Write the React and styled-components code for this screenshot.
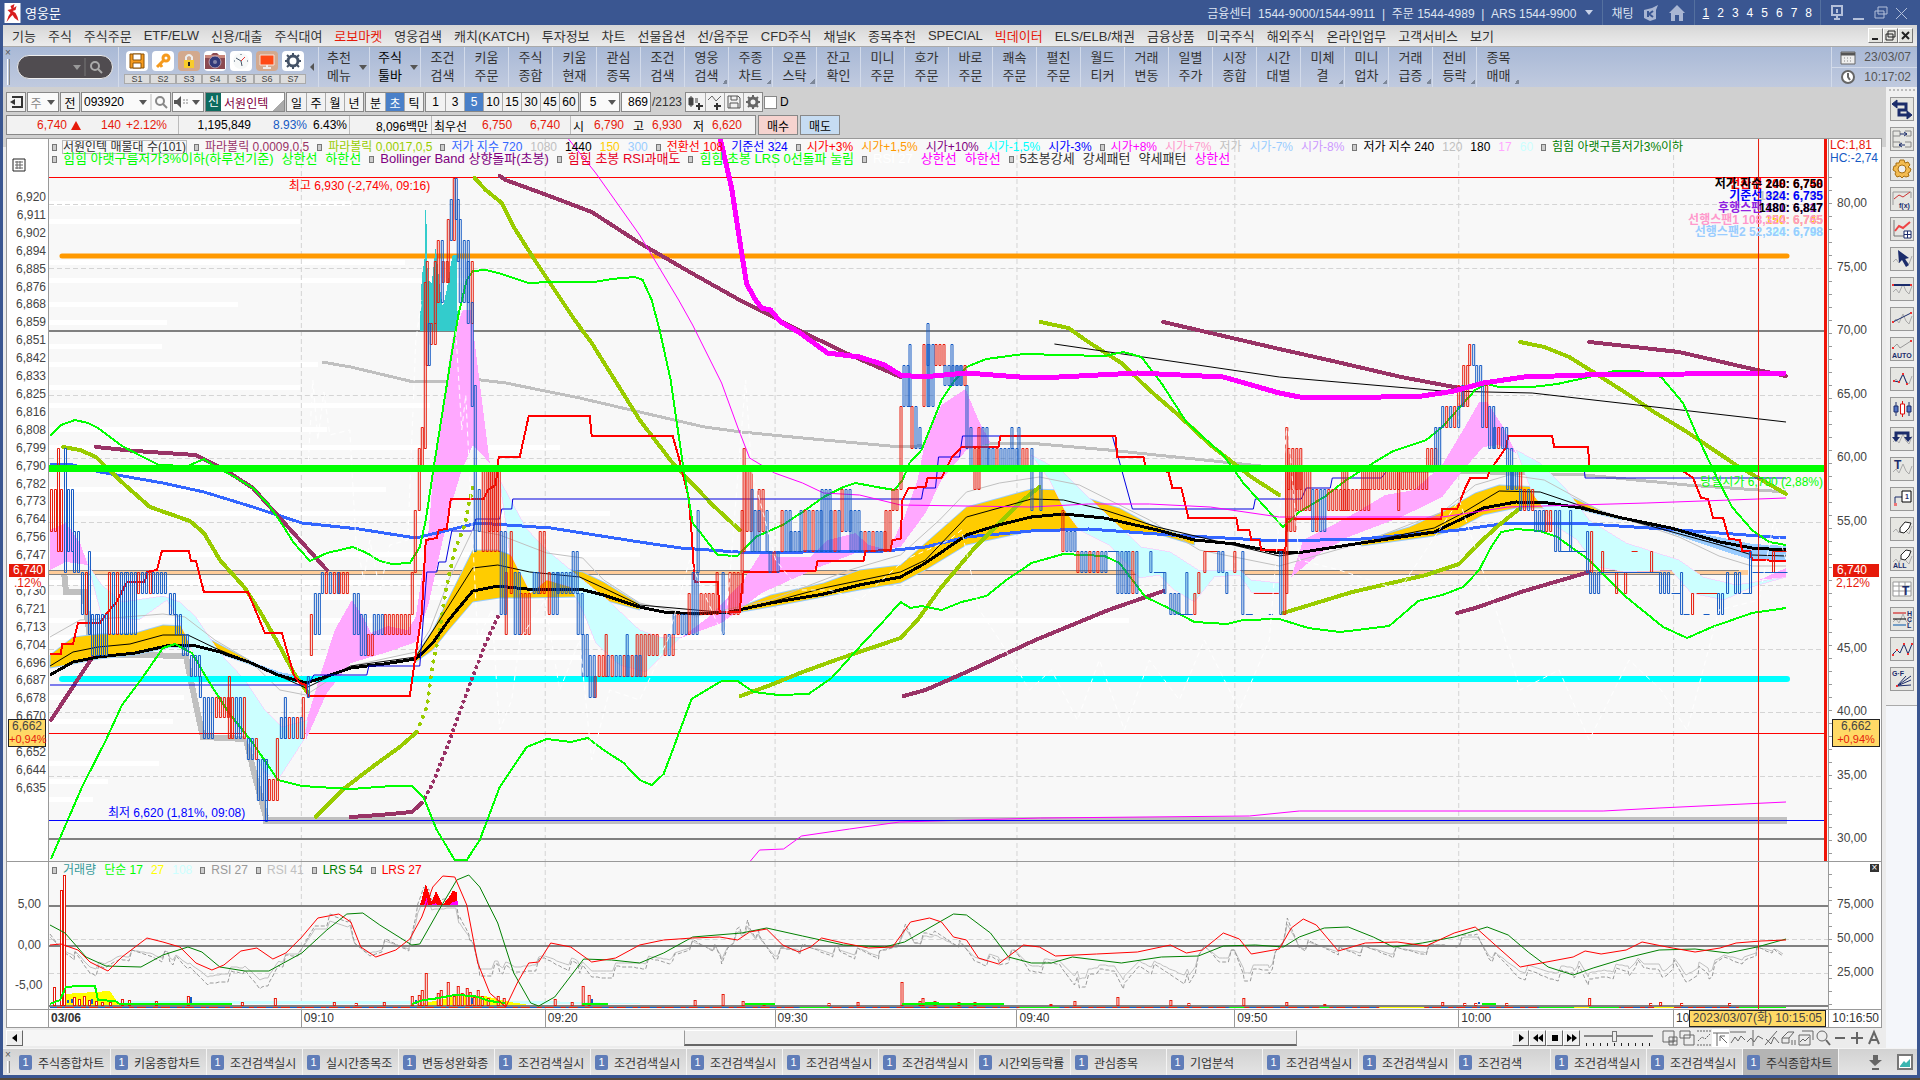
import React, { useState } from 'react';
import styled, { createGlobalStyle } from 'styled-components';

const IconText = styled.text`
  font-family: 'Liberation Sans', sans-serif;
  font-size: ${(props) => (props.$big ? 12 : 7)}px;
  font-weight: bold;
  fill: #1b2c6b;
`;

const menus = [
  '기능', '주식', '주식주문', 'ETF/ELW', '신용/대출', '주식대여', '로보마켓', '영웅검색', '캐치(KATCH)',
  '투자정보', '차트', '선물옵션', '선/옵주문', 'CFD주식', '채널K', '종목추천', 'SPECIAL', '빅데이터',
  'ELS/ELB/채권', '금융상품', '미국주식', '해외주식', '온라인업무', '고객서비스', '보기',
];

const shortcuts = [
  ['조건', '검색'], ['키움', '주문'], ['주식', '종합'], ['키움', '현재'], ['관심', '종목'],
  ['조건', '검색'], ['영웅', '검색', 1], ['주종', '차트', 1], ['오픈', '스탁', 1], ['잔고', '확인'],
  ['미니', '주문'], ['호가', '주문'], ['바로', '주문'], ['쾌속', '주문'], ['펼친', '주문'],
  ['월드', '티커'], ['거래', '변동'], ['일별', '주가'], ['시장', '종합'], ['시간', '대별'],
  ['미체', '결', 1], ['미니', '업차', 1], ['거래', '급증', 1], ['전비', '등락', 1], ['종목', '매매', 1],
];

const tabs = [
  '주식종합차트', '키움종합차트', '조건검색실시', '실시간종목조', '변동성완화종', '조건검색실시', '조건검색실시',
  '조건검색실시', '조건검색실시', '조건검색실시', '시간외등락률', '관심종목', '기업분석', '조건검색실시',
  '조건검색실시', '조건검색', '조건검색실시', '조건검색실시', '주식종합차트',
];

// [text, color], a null entry is the little square that opens a group
const legendTop = [
  null, ['서원인텍 매물대 수(101)', '#333', true],
  null, ['파라볼릭 0,0009,0,5', '#993366'],
  null, ['파라볼릭 0,0017,0,5', '#99cc00'],
  null, ['저가 지수 720', '#3366ff'], ['1080', '#c0c0c0'], ['1440', '#000'], ['150', '#ffcc00'], ['300', '#99ccff'],
  null, ['전환선 108', '#f00'], ['기준선 324', '#00f'],
  null, ['시가+3%', '#f00'], ['시가+1,5%', '#ff9900'], ['시가+10%', '#800080'], ['시가-1,5%', '#0ff'], ['시가-3%', '#00f'],
  null, ['시가+8%', '#f0f'], ['시가+7%', '#ff99cc'], ['저가', '#c0c0c0'], ['시가-7%', '#99ccff'], ['시가-8%', '#cc99ff'],
  null, ['저가 지수 240', '#000'], ['120', '#c0c0c0'], ['180', '#000'], ['17', '#ffa8ff'], ['60', '#ccffff'],
  null, ['힘힘 아랫구름저가3%이하', '#008000'],
];
const legendSecond = [
  null, ['힘힘 아랫구름저가3%이하(하루전기준)', '#0f0'], ['상한선', '#0f0'], ['하한선', '#0f0'],
  null, ['Bollinger Band 상향돌파(초봉)', '#800080'],
  null, ['힘힘 초봉 RSI과매도', '#e6001e'],
  null, ['힘힘 초봉 LRS 0선돌파 눌림', '#0f0'],
  null, ['RSI 27', '#fff'], ['상한선', '#f0f'], ['하한선', '#f0f'],
  null, ['5초봉강세', '#333'], ['강세패턴', '#333'], ['약세패턴', '#333'], ['상한선', '#f0f'],
];
const legendLower = [
  null, ['거래량', '#339999'], ['단순 17', '#0f0'], ['27', '#ff0'], ['108', '#ccffff'],
  null, ['RSI 27', '#999'],
  null, ['RSI 41', '#c0c0c0'],
  null, ['LRS 54', '#008000'],
  null, ['LRS 27', '#f00'],
];

const leftScale = [
  '6,920', '6,911', '6,902', '6,894', '6,885', '6,876', '6,868', '6,859', '6,851', '6,842', '6,833', '6,825',
  '6,816', '6,808', '6,799', '6,790', '6,782', '6,773', '6,764', '6,756', '6,747', '', '6,730', '6,721', '6,713',
  '6,704', '6,696', '6,687', '6,678', '6,670', '', '6,652', '6,644', '6,635',
];
const rightScale = ['80,00', '75,00', '70,00', '65,00', '60,00', '55,00', '', '45,00', '40,00', '35,00', '30,00'];

// each row is printed twice, the later series over the earlier one
const readouts = [
  ['전환선 108: 6,748', '#f00', '저가 지수 240: 6,750', '#000'],
  ['1080: 6,793', '#c0c0c0', '기준선 324: 6,735', '#00f'],
  ['후행스팬 181: 6,817', '#9020e0', '1480: 6,847', '#000'],
  ['150: 6,745', '#ffcc00', '선행스팬1 108,324: 6,765', '#ff99cc'],
  ['300: 6,748', '#b8ffff', '선행스팬2 52,324: 6,798', '#99ccff'],
];

// candle runs: from x, to x, high, low, color (r, b, m for mixed)
const candles = [
  [50, 57, 6780, 6760, 'r'], [57, 59, 6800, 6750, 'r'], [60, 64, 6780, 6750, 'r'], [64, 66, 6800, 6740, 'b'],
  [67, 73, 6780, 6750, 'b'], [73, 80, 6760, 6740, 'b'], [81, 88, 6740, 6720, 'm'], [88, 91, 6750, 6710, 'b'],
  [91, 97, 6720, 6700, 'b'], [97, 107, 6720, 6700, 'b'], [108, 125, 6740, 6710, 'm'], [126, 137, 6740, 6710, 'b'],
  [137, 152, 6740, 6730, 'm'], [152, 168, 6740, 6730, 'b'], [169, 174, 6730, 6720, 'b'], [175, 181, 6720, 6710, 'b'],
  [182, 190, 6710, 6700, 'b'], [190, 199, 6700, 6690, 'b'], [199, 203, 6690, 6680, 'b'], [203, 215, 6680, 6660, 'b'],
  [215, 228, 6680, 6670, 'r'], [228, 230, 6690, 6660, 'r'], [231, 246, 6680, 6660, 'm'], [247, 257, 6660, 6650, 'm'],
  [257, 266, 6650, 6630, 'b'], [265, 267, 6650, 6620, 'b'], [268, 276, 6640, 6630, 'r'], [276, 280, 6660, 6630, 'r'],
  [280, 304, 6670, 6660, 'm'], [284, 286, 6680, 6660, 'b'], [302, 304, 6680, 6660, 'r'], [307, 309, 6690, 6680, 'b'],
  [310, 314, 6720, 6700, 'r'], [314, 320, 6730, 6710, 'm'], [321, 338, 6740, 6730, 'm'], [338, 350, 6740, 6730, 'r'],
  [353, 360, 6730, 6710, 'b'], [360, 367, 6720, 6700, 'b'], [367, 374, 6710, 6700, 'r'], [373, 383, 6720, 6710, 'b'],
  [384, 411, 6720, 6710, 'r'], [411, 414, 6740, 6720, 'r'], [414, 418, 6770, 6740, 'r'], [418, 421, 6800, 6770, 'r'],
  [421, 424, 6810, 6790, 'r'], [424, 427, 6880, 6800, 'r'], [426, 429, 6890, 6840, 'r'], [428, 431, 6860, 6840, 'b'],
  [430, 435, 6860, 6850, 'r'], [434, 437, 6890, 6860, 'r'], [437, 443, 6900, 6870, 'm'], [442, 449, 6890, 6880, 'r'],
  [447, 451, 6910, 6880, 'r'], [450, 454, 6920, 6900, 'm'], [453, 455, 6930, 6900, 'r'], [455, 457, 6930, 6910, 'b'],
  [457, 461, 6920, 6890, 'm'], [459, 463, 6910, 6870, 'b'], [463, 468, 6900, 6870, 'b'], [467, 472, 6890, 6860, 'm'],
  [471, 474, 6870, 6820, 'b'], [474, 478, 6830, 6750, 'b'], [478, 482, 6780, 6760, 'b'], [482, 500, 6790, 6750, 'r'],
  [488, 498, 6790, 6760, 'r'], [500, 505, 6760, 6720, 'b'], [505, 509, 6740, 6710, 'r'], [510, 514, 6760, 6730, 'r'],
  [514, 520, 6740, 6710, 'm'], [520, 530, 6730, 6710, 'r'], [533, 539, 6740, 6730, 'b'], [539, 546, 6760, 6730, 'r'],
  [548, 557, 6740, 6720, 'm'], [557, 572, 6740, 6730, 'b'], [572, 577, 6750, 6730, 'b'], [577, 582, 6730, 6710, 'b'],
  [582, 589, 6710, 6690, 'b'], [589, 594, 6700, 6680, 'b'], [594, 597, 6690, 6680, 'r'], [598, 606, 6700, 6690, 'r'],
  [605, 607, 6710, 6690, 'r'], [607, 640, 6700, 6690, 'm'], [626, 628, 6710, 6690, 'b'], [636, 648, 6710, 6690, 'r'],
  [648, 658, 6710, 6700, 'r'], [664, 673, 6710, 6700, 'm'], [673, 688, 6720, 6710, 'm'], [688, 692, 6730, 6710, 'r'],
  [692, 700, 6740, 6710, 'b'], [697, 699, 6770, 6740, 'b'], [700, 716, 6730, 6720, 'r'], [716, 720, 6740, 6720, 'r'],
  [722, 726, 6740, 6710, 'b'], [729, 740, 6740, 6720, 'r'], [741, 744, 6770, 6730, 'r'], [743, 745, 6800, 6750, 'r'],
  [746, 751, 6790, 6760, 'r'], [751, 754, 6780, 6750, 'b'], [754, 760, 6770, 6750, 'm'], [758, 766, 6780, 6760, 'r'],
  [766, 769, 6770, 6750, 'b'], [769, 780, 6750, 6740, 'm'], [781, 790, 6770, 6750, 'm'], [790, 800, 6760, 6750, 'b'],
  [800, 821, 6770, 6750, 'm'], [821, 830, 6780, 6750, 'b'], [830, 841, 6770, 6750, 'm'], [841, 850, 6780, 6760, 'm'],
  [850, 860, 6770, 6750, 'b'], [860, 885, 6760, 6750, 'm'], [885, 892, 6770, 6750, 'r'], [892, 900, 6780, 6770, 'r'],
  [900, 903, 6820, 6780, 'r'], [903, 910, 6840, 6820, 'm'], [909, 911, 6850, 6820, 'b'], [911, 919, 6820, 6800, 'm'],
  [919, 923, 6810, 6800, 'b'], [923, 928, 6850, 6820, 'm'], [927, 929, 6860, 6840, 'b'], [928, 935, 6850, 6820, 'b'],
  [935, 946, 6850, 6840, 'r'], [944, 962, 6840, 6830, 'b'], [951, 953, 6850, 6830, 'b'], [956, 966, 6840, 6830, 'm'],
  [966, 970, 6830, 6800, 'b'], [970, 974, 6810, 6790, 'b'], [974, 980, 6800, 6780, 'r'], [978, 988, 6810, 6790, 'm'],
  [988, 1004, 6800, 6790, 'm'], [1004, 1020, 6800, 6790, 'b'], [1011, 1013, 6810, 6800, 'b'], [1018, 1020, 6810, 6790, 'b'],
  [1022, 1030, 6800, 6790, 'r'], [1031, 1035, 6800, 6770, 'b'], [1040, 1044, 6790, 6770, 'b'], [1062, 1066, 6770, 6750, 'r'],
  [1066, 1075, 6760, 6750, 'b'], [1077, 1108, 6750, 6740, 'm'], [1117, 1127, 6750, 6730, 'b'], [1128, 1139, 6750, 6730, 'm'],
  [1150, 1153, 6750, 6740, 'b'], [1164, 1168, 6740, 6730, 'b'], [1170, 1180, 6730, 6720, 'b'], [1186, 1188, 6740, 6720, 'b'],
  [1194, 1198, 6730, 6720, 'r'], [1198, 1201, 6740, 6730, 'r'], [1204, 1206, 6750, 6740, 'r'], [1218, 1223, 6750, 6740, 'b'],
  [1226, 1229, 6740, 6730, 'm'], [1234, 1236, 6750, 6740, 'r'], [1242, 1245, 6750, 6720, 'b'], [1280, 1286, 6750, 6720, 'm'],
  [1286, 1288, 6810, 6730, 'r'], [1288, 1301, 6800, 6780, 'r'], [1286, 1297, 6790, 6760, 'r'], [1297, 1312, 6790, 6770, 'r'],
  [1312, 1328, 6780, 6760, 'm'], [1328, 1372, 6780, 6770, 'r'], [1342, 1348, 6790, 6770, 'r'], [1362, 1400, 6790, 6780, 'r'],
  [1398, 1402, 6790, 6770, 'm'], [1402, 1428, 6790, 6780, 'r'], [1427, 1438, 6800, 6790, 'r'], [1435, 1443, 6810, 6790, 'm'],
  [1442, 1460, 6820, 6810, 'm'], [1458, 1464, 6830, 6820, 'm'], [1463, 1469, 6840, 6820, 'r'], [1469, 1477, 6850, 6840, 'm'],
  [1476, 1483, 6840, 6830, 'b'], [1482, 1490, 6830, 6810, 'm'], [1489, 1495, 6820, 6800, 'b'], [1494, 1508, 6810, 6800, 'm'],
  [1507, 1513, 6800, 6780, 'b'], [1512, 1521, 6790, 6780, 'm'], [1520, 1535, 6780, 6770, 'm'], [1535, 1546, 6770, 6760, 'b'],
  [1546, 1554, 6770, 6760, 'r'], [1555, 1561, 6770, 6750, 'b'], [1570, 1572, 6770, 6750, 'b'], [1587, 1592, 6760, 6740, 'm'],
  [1590, 1599, 6740, 6730, 'b'], [1602, 1603, 6750, 6740, 'r'], [1616, 1618, 6740, 6730, 'r'], [1625, 1627, 6740, 6730, 'r'],
  [1651, 1653, 6750, 6740, 'r'], [1660, 1672, 6740, 6730, 'b'], [1681, 1684, 6740, 6720, 'b'], [1692, 1696, 6730, 6720, 'm'],
  [1718, 1724, 6730, 6720, 'm'], [1727, 1731, 6740, 6730, 'b'], [1735, 1743, 6740, 6730, 'b'], [1750, 1753, 6750, 6730, 'b'],
  [1773, 1775, 6750, 6740, 'r'],
];

// one-tick candles that only leave a dash: x, x, price, color
const dashes = [
  [1108, 1118, 6750, 'b'], [1154, 1165, 6740, 'b'], [1180, 1193, 6720, 'b'], [1206, 1218, 6750, 'r'],
  [1246, 1253, 6720, 'b'], [1254, 1279, 6730, 'r'], [1269, 1273, 6720, 'b'], [1561, 1587, 6750, 'b'],
  [1598, 1660, 6740, 'b'], [1632, 1638, 6750, 'r'], [1672, 1681, 6730, 'b'], [1684, 1690, 6720, 'b'],
  [1697, 1718, 6730, 'r'], [1704, 1710, 6720, 'b'], [1743, 1750, 6730, 'b'], [1753, 1788, 6740, 'b'],
  [1775, 1787, 6750, 'r'],
];

const priceY = (p) => Math.round(178 + (6930 - p) * 2.074);

const candlePath = (wanted) => {
  let d = '';
  candles.forEach(([x0, x1, hi, lo, color], run) => {
    for (let x = x0, i = 0; x < x1; x += 4, i += 1) {
      const own = color === 'm' ? 'rbrbb'[(i + run) % 5] : color;
      if (own === wanted) d += `M${x} ${priceY(hi)}h2V${priceY(lo)}h-2Z`;
    }
  });
  dashes.forEach(([x0, x1, p, color]) => {
    if (color === wanted) d += `M${x0} ${priceY(p)}H${x1}`;
  });
  return d;
};

const whiteBars = [
  [203, 351], [221, 300], [262, 405], [280, 468], [304, 238], [322, 167], [346, 162], [364, 318], [387, 300],
  [405, 430], [429, 327], [447, 560], [489, 386], [513, 610], [554, 640], [582, 700], [597, 780], [620, 1130],
  [637, 780], [657, 620], [697, 184], [721, 173], [763, 159], [781, 108], [799, 93],
];

const pinkClouds = [
  '50,530 66,523 80,543 88,565 66,562 50,570',
  '306,723 322,670 335,630 352,600 361,613 371,633 388,626 408,630 416,617 429,529 434,467 453,337 463,310 471,310 480,383 490,463 473,445 461,473 449,513 429,603 416,642 388,652 351,663 327,693 306,740',
  '681,638 709,617 742,583 762,552 779,557 811,557 828,540 856,533 869,545 889,550 905,517 918,480 926,440 942,405 966,389 979,420 991,443 967,450 942,480 926,513 901,547 856,553 820,567 762,593 722,623',
  '1292,577 1304,540 1349,517 1386,495 1415,490 1443,465 1464,430 1480,402 1488,402 1504,427 1517,453 1500,445 1484,447 1464,470 1443,497 1402,517 1349,537 1321,553',
  '1760,580 1787,568 1787,577',
];
const skyClouds = [
  '88,565 102,585 122,602 163,596 180,602 196,617 220,653 245,680 265,710 282,727 308,720 304,740 278,780 265,773 245,737 224,707 204,677 180,623 167,600 139,620 102,617',
  '500,480 527,529 547,550 571,570 608,600 640,630 660,637 681,637 646,672 620,665 596,643 584,613 571,587 547,580 531,593 510,553',
  '1032,455 1064,472 1089,497 1113,520 1142,547 1171,552 1199,570 1240,570 1252,580 1280,583 1280,592 1252,592 1240,575 1215,577 1195,602 1175,590 1160,575 1140,578 1130,567 1110,545 1080,530 1065,510 1050,480',
  '1517,450 1541,463 1566,488 1590,520 1627,543 1680,560 1704,577 1737,585 1787,577 1753,587 1725,600 1692,593 1672,570 1627,572 1598,567 1578,540 1558,527 1533,493',
];
const goldClouds = [
  '50,655 73,637 98,634 135,633 163,625 188,626 215,642 249,660 278,676 249,664 220,654 196,648 171,647 135,655 98,659 73,664 50,668',
  '416,655 433,630 449,598 473,550 498,550 525,560 560,568 583,572 604,582 640,604 640,610 604,600 580,597 527,598 500,598 473,602 449,630 433,650 416,662',
  '730,611 771,595 824,583 860,570 901,565 926,543 967,507 1000,498 1032,489 1064,490 1100,502 1120,508 1150,524 1195,539 1195,545 1158,534 1105,530 1064,529 1032,531 967,545 926,570 901,583 860,590 771,607 730,614',
  '1362,541 1410,527 1443,512 1476,493 1500,485 1541,487 1570,496 1600,510 1623,518 1623,520 1582,510 1541,508 1517,508 1484,515 1460,528 1435,536 1362,546',
];

const bandUpper = '50,436 61,425 75,420 88,423 98,428 122,446 143,457 159,465 188,466 204,459 216,467 235,477 253,488 269,505 282,524 294,543 310,561 327,553 353,547 367,553 380,561 392,564 410,563 420,547 426,520 434,467 443,410 453,347 459,313 467,280 473,271 486,270 502,274 529,283 549,282 594,282 612,279 635,277 643,280 652,300 660,330 671,380 683,463 693,523 701,533 718,555 738,556 756,537 783,525 803,512 824,497 844,487 856,483 877,487 895,490 903,480 910,463 922,450 942,400 954,382 967,367 987,359 1024,354 1105,356 1124,352 1142,357 1162,383 1187,422 1224,455 1244,483 1280,523 1284,527 1300,512 1325,497 1347,480 1374,463 1394,451 1427,440 1443,427 1460,408 1476,390 1488,384 1500,387 1533,387 1558,384 1590,377 1615,371 1639,371 1662,377 1684,403 1700,440 1719,480 1733,507 1753,530 1770,542 1787,545';
const bandLower = '51,859 82,787 106,740 122,705 143,677 163,648 175,644 192,653 208,680 229,713 253,743 278,780 302,786 351,789 392,786 412,786 424,798 437,830 455,860 467,860 480,840 500,787 527,747 547,739 571,742 588,738 604,750 624,763 640,780 652,785 664,774 676,742 686,715 692,699 722,681 738,681 754,692 779,695 809,694 832,678 860,647 885,620 901,602 911,608 922,606 942,610 962,602 987,596 1007,580 1032,563 1064,554 1105,556 1120,563 1146,597 1167,607 1195,622 1228,624 1244,620 1280,619 1309,628 1341,632 1366,629 1390,626 1419,601 1443,595 1464,587 1480,570 1492,547 1502,532 1517,529 1541,531 1558,537 1590,560 1627,597 1664,627 1688,638 1713,627 1753,613 1787,608';
const magentaThick = '720,136 732,188 740,240 747,284 756,300 762,308 771,310 781,322 799,332 828,353 860,357 885,365 901,375 922,377 967,373 1020,377 1060,377 1138,373 1224,377 1280,393 1300,397 1341,398 1423,396 1455,391 1484,383 1525,377 1586,375 1787,373';
const magentaThin = '568,138 596,173 640,235 679,300 693,325 722,383 738,427 750,458 775,473 803,483 824,493 860,495 901,505 1032,507 1089,504 1150,504 1211,507 1280,517 1443,517 1509,507 1647,503 1787,498';
const magentaLow = '750,862 760,850 784,849 802,836 850,829 900,822 1041,818 1250,816 1300,811 1604,811 1660,808 1787,802';
const olive = [
  '63,447 80,450 96,457 106,467 125,485 150,507 190,521 204,533 220,560 245,588 261,613 278,643 294,673 308,693',
  '316,817 345,788 375,765 400,747 417,732',
  '475,178 486,190 502,203 514,227 535,260 575,320 592,343 640,420 673,463 713,505 740,530',
  '741,696 771,685 803,672 836,660 901,638 918,620 942,587 975,548 1020,503 1040,487',
  '1041,322 1069,328 1089,342 1122,363 1150,390 1179,415 1211,445 1252,477 1280,495',
  '1284,613 1353,592 1427,575 1460,564 1480,543 1500,525 1521,508',
  '1521,342 1545,347 1570,357 1594,372 1627,393 1655,412 1688,432 1737,465 1787,494',
];
const oliveDots = '417,732 427,707 432,670 440,630 446,590 455,550 465,525 470,500 473,487';
const plum = [
  '51,720 92,658',
  '96,447 135,451 196,455 212,463 233,475 253,488 290,529 327,570',
  '351,817 380,815 412,812 422,803',
  '500,176 506,180 547,195 592,212 640,243 690,272 740,300 803,332 844,352 901,377',
  '904,696 926,690 967,672 1036,640 1109,610 1164,591',
  '1164,322 1280,349 1329,360 1402,377 1460,388',
  '1458,613 1476,608 1525,591 1590,572',
  '1590,342 1680,352 1749,368 1787,376',
];
const plumDots = '422,803 433,783 449,743 469,687 486,643 499,615';
const silver = '322,362 351,367 414,382 449,381 473,379 506,383 580,398 640,412 705,427 742,432 803,438 901,447 967,443 1040,444 1109,450 1224,462 1280,468 1443,472 1586,475 1688,485 1787,492';
const silverStep = '64,571 66,592 84,592 92,654 186,656 195,700 203,737 246,739 256,780 266,817';
const blueThick = '50,464 73,465 100,472 163,483 204,492 253,507 302,523 359,529 416,538 449,530 478,523 551,528 640,542 681,548 738,552 803,552 885,551 926,547 967,537 1032,531 1089,529 1171,535 1280,541 1362,539 1460,530 1509,523 1574,523 1680,530 1787,538';
const blackThick = '50,675 73,662 98,657 135,653 171,645 196,646 220,652 249,662 278,675 306,683 322,678 351,668 384,664 416,659 433,643 449,620 473,591 498,586 527,589 580,589 604,595 640,607 664,612 697,614 730,612 771,603 824,594 860,585 901,577 926,563 967,535 999,525 1032,517 1064,514 1105,518 1158,530 1195,540 1236,544 1280,553 1304,552 1362,543 1435,532 1460,520 1484,508 1517,502 1549,503 1582,508 1623,518 1672,528 1721,542 1753,548 1787,550';
const blackMid = '50,666 73,652 98,647 130,644 163,635 188,635 215,648 249,662 306,688 351,666 416,657 440,620 473,568 498,565 530,572 580,577 604,588 640,605 730,613 824,588 901,572 926,560 967,517 1032,499 1064,500 1105,510 1158,527 1280,556 1362,543 1435,528 1460,515 1500,491 1541,492 1600,512 1721,545 1753,555 1787,556';
const greyMid = '50,637 80,620 100,619 163,614 185,617 215,640 249,660 280,690 306,695 351,666 416,652 430,630 449,580 473,530 500,535 547,553 583,558 604,580 640,603 697,616 771,600 850,570 901,555 940,520 967,492 1000,483 1040,477 1080,485 1150,520 1200,550 1280,566 1362,543 1443,512 1476,485 1510,475 1545,480 1600,510 1680,537 1720,556 1753,566 1787,566';
const blackLong = '1055,344 1280,377 1443,391 1533,393 1647,406 1787,422';
const redStep = '50,654 61,654 62,644 73,644 78,623 100,623 107,613 116,603 127,582 145,582 147,572 157,570 162,551 189,551 191,561 196,561 204,592 248,592 265,633 282,633 294,675 300,683 306,685 308,696 410,696 422,613 426,540 437,538 439,530 447,529 451,499 484,499 488,490 496,485 499,457 520,457 529,416 590,416 592,436 673,436 679,457 689,498 692,533 695,582 718,582 720,612 740,612 744,572 816,571 818,561 864,561 866,551 891,550 893,540 901,539 903,500 909,488 926,487 928,478 942,478 952,458 962,447 999,447 1001,436 1116,436 1118,457 1144,457 1146,466 1169,472 1173,488 1182,488 1189,518 1237,518 1239,530 1250,530 1252,540 1260,540 1262,550 1286,550 1288,519 1442,519 1443,509 1458,509 1466,488 1471,478 1488,478 1490,472 1507,447 1509,436 1553,436 1555,447 1589,447 1590,466 1682,470 1694,478 1702,498 1709,499 1714,518 1724,518 1730,539 1741,540 1743,551 1751,551 1753,560 1787,561';
const blueStep = '50,685 308,685 314,675 367,675 369,666 420,666 427,572 437,572 439,562 446,562 452,531 473,531 476,519 500,519 502,509 512,509 513,499 922,499 924,488 936,488 939,457 960,457 963,436 1113,436 1133,509 1254,509 1256,499 1302,499 1307,488 1331,488 1333,478 1382,478 1390,468 1585,468 1586,478 1787,478';
const teal = '420,331 422,277 425,257 426,192 428,280 432,283 436,247 440,287 443,307 447,290 450,270 453,255 457,255 458,331';

const lrsRed = '50,945 61,944 78,950 90,962 108,971 122,957 147,938 163,942 180,947 196,963 212,970 224,965 241,951 257,948 273,959 286,953 302,937 318,918 339,914 351,922 361,947 376,957 396,950 410,939 422,917 433,887 443,876 455,877 467,905 478,963 490,993 506,1007 518,982 529,963 539,962 551,943 571,947 592,962 616,958 640,945 664,940 693,938 720,937 738,940 750,932 767,929 783,945 799,952 811,947 822,938 844,943 869,948 893,947 911,922 930,918 942,922 954,937 967,940 979,958 999,964 1024,945 1040,947 1056,956 1097,954 1138,952 1171,945 1187,953 1203,950 1224,933 1240,939 1252,954 1280,949 1292,928 1304,919 1317,925 1339,951 1366,943 1398,942 1427,946 1455,933 1476,927 1496,945 1521,967 1574,957 1586,951 1602,954 1627,950 1643,942 1668,947 1696,952 1721,948 1737,943 1762,941 1787,940';
const lrsGreen = '50,925 65,933 86,957 106,966 141,967 163,955 188,947 202,952 220,967 245,971 269,971 302,953 327,930 347,914 363,913 380,925 412,945 420,944 441,907 457,880 469,875 480,887 498,923 514,973 531,1003 539,1006 555,997 584,959 612,960 640,963 664,953 693,937 742,933 767,928 803,936 844,945 885,947 905,942 926,930 954,914 967,915 991,933 1009,957 1032,963 1052,963 1073,957 1122,963 1162,957 1199,956 1224,946 1256,945 1284,947 1300,937 1325,928 1349,927 1374,937 1394,947 1423,943 1455,937 1488,927 1509,935 1529,952 1549,967 1574,975 1594,968 1627,958 1660,950 1696,949 1729,953 1758,947 1787,939';
const rsi = [
  [50, 938], [62, 950], [75, 955], [90, 970], [105, 972], [120, 957], [150, 955], [170, 958], [190, 972], [210, 985],
  [225, 978], [245, 975], [262, 990], [270, 985], [280, 963], [300, 957], [315, 925], [330, 920], [350, 922], [355, 948],
  [370, 955], [385, 945], [410, 948], [418, 910], [426, 885], [432, 905], [456, 895], [460, 920], [470, 935], [480, 975],
  [500, 968], [515, 975], [545, 962], [580, 968], [592, 980], [610, 974], [640, 965], [670, 962], [675, 955], [690, 945],
  [715, 950], [722, 963], [728, 945], [742, 930], [750, 925], [760, 938], [775, 955], [800, 950], [840, 952], [880, 957],
  [900, 945], [906, 925], [915, 940], [935, 937], [960, 945], [975, 960], [1000, 963], [1015, 955], [1030, 970],
  [1060, 965], [1080, 985], [1100, 975], [1115, 972], [1125, 988], [1140, 965], [1170, 975], [1190, 980], [1205, 950],
  [1220, 960], [1235, 955], [1245, 978], [1270, 970], [1283, 945], [1288, 920], [1300, 945], [1340, 950], [1400, 953],
  [1430, 950], [1460, 942], [1478, 935], [1490, 955], [1520, 975], [1550, 977], [1575, 975], [1580, 965], [1590, 983],
  [1605, 975], [1630, 973], [1636, 963], [1645, 972], [1660, 968], [1665, 978], [1675, 965], [1687, 983], [1700, 970],
  [1710, 975], [1725, 960], [1745, 960], [1758, 950], [1775, 950], [1787, 955],
];

// the raw series is only kept at its turning points, the ticks between them are filled in here
const rsiPoints = (amp, lift) => {
  const out = [];
  for (let i = 0; i < rsi.length - 1; i += 1) {
    const [x0, y0] = rsi[i];
    const [x1, y1] = rsi[i + 1];
    for (let x = x0; x < x1; x += 3) {
      const noise = ((x * 37) % 11) / 11 - 0.5;
      const y = y0 + ((y1 - y0) * (x - x0)) / (x1 - x0);
      out.push(`${x},${Math.round(y + noise * amp - (y - 945) * lift)}`);
    }
  }
  return out.join(' ');
};

const volumes = [
  [54, 987], [61, 890], [64, 875], [74, 997], [79, 999], [84, 996], [89, 1000], [96, 1001], [102, 1002], [110, 1002],
  [122, 999], [129, 1000], [156, 1001], [188, 996], [242, 1002], [275, 998], [334, 1002], [356, 1003], [384, 1002],
  [412, 996], [419, 995], [422, 990], [426, 973], [438, 993], [441, 990], [448, 982], [454, 996], [458, 986],
  [462, 993], [467, 988], [470, 992], [474, 997], [478, 990], [482, 996], [488, 998], [498, 996], [504, 998],
  [555, 999], [572, 1002], [583, 986], [589, 995], [695, 1000], [723, 994], [743, 1001], [764, 1003], [829, 1003],
  [858, 1002], [902, 982], [920, 1001], [923, 998], [935, 1001], [959, 1002], [975, 1002], [1051, 1004], [1075, 1001],
  [1118, 997], [1171, 1000], [1189, 1003], [1244, 998], [1287, 1002], [1325, 1004], [1443, 1002], [1465, 1003],
  [1476, 1003], [1507, 1003], [1590, 998], [1651, 1003], [1661, 1002], [1682, 1003], [1730, 1003],
];

const vGrid = [301, 545, 775, 1017, 1235, 1459, 1674];
const times = ['09:10', '09:20', '09:30', '09:40', '09:50', '10:00', '10:10'];

const PriceChart = () => (
  <Drawing viewBox="49 139 1780 722" preserveAspectRatio="none" shapeRendering="crispEdges" fill="none">
    <rect x="49" y="139" width="1780" height="722" fill="#f8f8f8" />
    {whiteBars.map(([y, x]) => (
      <rect key={y} x="49" y={y - 2} width={x - 49} height="5" fill="#fff" />
    ))}
    <g stroke="#d4d4d4" strokeDasharray="5 3">
      {[204, 268, 395, 458, 522, 585, 649, 712, 776].map((y) => (
        <path key={y} d={`M49 ${y + 0.5}H1825`} />
      ))}
      {vGrid.map((x) => (
        <path key={x} d={`M${x + 0.5} 139V861`} />
      ))}
    </g>
    <polyline points={silverStep} stroke="#c0c0c0" strokeWidth="6" />
    <rect x="263" y="817" width="1525" height="7" fill="#c0c0c0" />
    <rect x="49" y="570" width="1700" height="5" fill="#ffcc99" />
    <path d="M49 570.5H1740M49 574.5H1740" stroke="#808080" />
    <path d="M49 331H1825M49 839H1825" stroke="#808080" strokeWidth="2" />
    <path d="M49 177.5H1825M49 733.5H1825" stroke="#f00" />
    <path d="M62 256H1788" stroke="#ff9900" strokeWidth="5" strokeLinecap="round" shapeRendering="auto" />
    <polygon points={teal} fill="#33cccc" />
    <polyline points={silver} stroke="#c0c0c0" strokeWidth="3" />
    {goldClouds.map((p) => <polygon key={p} points={p} fill="#ffcc00" stroke="#99ccff" strokeWidth="1" />)}
    <polygon points="1640,522 1700,533 1753,544 1787,546 1787,560 1753,560 1721,550 1680,536" fill="#99ccff" />
    <polygon points="255,663 280,672 306,677 318,676 306,682 280,678" fill="#99ccff" />
    {pinkClouds.map((p) => <polygon key={p} points={p} fill="#ffa8ff" />)}
    {skyClouds.map((p) => <polygon key={p} points={p} fill="#ccffff" stroke="#ffb8ff" strokeWidth="0.5" />)}
    <polyline points={greyMid} stroke="#c0c0c0" />
    <polyline points={blueThick} stroke="#3366ff" strokeWidth="3" />
    <path d="M62 679H1788" stroke="#0ff" strokeWidth="6" strokeLinecap="round" shapeRendering="auto" />
    <g strokeWidth="4" strokeLinecap="round" strokeLinejoin="round">
      {olive.map((p) => <polyline key={p} points={p} stroke="#99cc00" />)}
      <polyline points={oliveDots} stroke="#99cc00" strokeDasharray="0.1 8" />
      {plum.map((p) => <polyline key={p} points={p} stroke="#993366" />)}
      <polyline points={plumDots} stroke="#993366" strokeDasharray="0.1 6" />
    </g>
    <polyline points={blackMid} stroke="#000" />
    <polyline points={blackLong} stroke="#000" />
    <polyline points={blackThick} stroke="#000" strokeWidth="3" />
    <polyline points={blueStep} stroke="#0000e0" />
    <polyline points={redStep} stroke="#f00" strokeWidth="2" />
    <polyline points={bandUpper} stroke="#0f0" strokeWidth="2" />
    <polyline points={bandLower} stroke="#0f0" strokeWidth="2" />
    <polyline points={magentaThin} stroke="#f0f" />
    <polyline points={magentaLow} stroke="#f0f" />
    <path d={candlePath('r')} stroke="#e61a0a" transform="translate(0.5 0.5)" />
    <path d={candlePath('b')} stroke="#155ac4" transform="translate(0.5 0.5)" />
    <polyline points={magentaThick} stroke="#f0f" strokeWidth="5" strokeLinejoin="round" />
    <g stroke="#fff" strokeDasharray="5 4">
      <path d="M308 470L313 380L318 440L324 392L330 435L350 430L356 540L364 580L370 540L380 590L390 545L408 540L416 340L422 300" />
      <path d="M456 331L462 430L466 395L472 520L478 640L492 610L500 730L512 700L520 640L545 600L560 690L580 640L592 760L610 690L640 700L668 640L690 560L725 640L746 380L752 470L776 560L800 590L830 590L860 600L905 560L950 540L962 530L980 610L1000 640L1030 690L1052 670L1078 720L1100 660L1125 730L1150 660L1180 700L1205 640L1240 710L1270 640L1288 420L1300 560L1340 570L1400 590L1460 500L1500 620L1521 690L1560 670L1590 740L1630 660L1662 690L1688 730L1720 610L1760 600L1775 520L1787 560" />
    </g>
    <path d="M49 820.5H1825" stroke="#00f" />
    <path d="M49 468H1825" stroke="#0f0" strokeWidth="7" />
    <path d="M1759.5 139V861" stroke="#e61a0a" />
    <path d="M1826.5 139V861" stroke="#f01408" strokeWidth="3" />
    <ChartText x="289" y="190" fill="#f00">최고 6,930 (-2,74%, 09:16)</ChartText>
    <ChartText x="108" y="817" fill="#00f">최저 6,620 (1,81%, 09:08)</ChartText>
    <ChartText x="1824" y="486" fill="#0f0" textAnchor="end">당일시가 6,790 (2,88%)</ChartText>
  </Drawing>
);

const VolumeChart = () => (
  <Drawing viewBox="49 862 1780 147" preserveAspectRatio="none" shapeRendering="crispEdges" fill="none">
    <rect x="49" y="862" width="1780" height="147" fill="#f8f8f8" />
    <g stroke="#d4d4d4" strokeDasharray="5 3">
      <path d="M49 939.5H1829M49 973.5H1829" />
      {vGrid.map((x) => (
        <path key={x} d={`M${x + 0.5} 862V1009`} />
      ))}
    </g>
    <polygon points="120,1001 540,1001 660,1004 120,1004" fill="#ccffff" />
    <polygon points="62,1005 65,994 110,991 118,1003 135,1005" fill="#ff0" />
    <polygon points="415,1005 440,1000 460,995 485,996 510,1002 530,1005" fill="#ff0" />
    <polyline points={rsiPoints(8, 0.2)} stroke="#c0c0c0" />
    <polyline points={rsiPoints(12, 0)} stroke="#999" strokeDasharray="4 2" />
    <polygon points="420,906 426,884 432,902 436,891 443,905 450,896 453,891 457,892 458,906" fill="#f00" />
    <polygon points="424,906 427,897 429,906 436,903 439,906 449,906 453,902 458,901 458,906" fill="#f0f" />
    <path d="M49 906H1829M49 946H1829M49 1006H1829" stroke="#808080" strokeWidth="2" />
    {volumes.map(([x, y]) => (
      <rect key={x} x={x - 0.5} y={y + 0.5} width="2" height={1005 - y} stroke="#e61a0a" fill="#fff" />
    ))}
    <path d="M68 1003V1000M72 1003V999M92 1004V999M191 1004V997M416 1004V1000M472 1004V998M592 1004V999M1480 1004V1002" stroke="#155ac4" strokeWidth="2" />
    <polyline points="50,1004 60,1000 66,987 78,986 95,986 98,1000 115,1001 120,1004 232,1004" stroke="#0f0" strokeWidth="2" />
    <polyline points="412,1004 424,1000 433,999 455,995 475,996 490,1001 505,1003" stroke="#0f0" strokeWidth="2" />
    <path d="M582 1004H608M745 1004H775M902 1004H1005M925 1003H940M1483 1004H1497" stroke="#0f0" strokeWidth="2" />
    <path d="M50 1007.5H1787" stroke="#e61a0a" />
    <path d="M50 1007.5H1787" stroke="#155ac4" strokeDasharray="7 5 3 9" />
    <path d="M800 1007.5H830M1020 1007.5H1060M1230 1007.5H1245M1320 1007.5H1330M1540 1007.5H1620M1740 1007.5H1787" stroke="#0f0" />
    <path d="M1380 1007.5H1425M1575 1007.5H1590M1655 1007.5H1675" stroke="#ff0" />
    <polyline points={lrsGreen} stroke="#008000" />
    <polyline points={lrsRed} stroke="#f00" />
    <path d="M1759.5 862V1009" stroke="#e61a0a" />
  </Drawing>
);

const Legend = ({ items, large }) => (
  <LegendRow $large={large}>
    {items.map((item, i) =>
      item ? (
        <LegendName key={i} $color={item[1]} $boxed={item[2]}>{item[0]}</LegendName>
      ) : (
        <LegendMark key={i} />
      )
    )}
  </LegendRow>
);

const wave = <path d="M2 14L5 11L8 15L12 6L15 13L18 16L21 8" stroke="#aaa" />;
const railIcons = [
  ['되돌리기', <g stroke="#1b2c6b" strokeWidth="3"><path d="M6 6H15V12H8V17H17" /><path d="M6 2L1 6L6 10ZM16 13L21 17L16 21Z" fill="#1b2c6b" strokeWidth="1" /></g>],
  ['배치', <g stroke="#888"><path d="M2 3H9V8H2ZM2 8V19H9V14H2" /><path d="M14 3H20V8H15M14 19H20V14H14" /><path d="M9 6H16M13 4L16 6L13 8M14 17H8M11 15L8 17L11 19" stroke="#1b2c6b" /></g>],
  ['설정', <g><path d="M9 2H13L14 5L17 4L19 7L17 9L20 11L19 14L17 15L18 18L15 19L13 18L11 20L9 18L6 19L4 16L5 14L2 12L3 8L5 8L5 5L8 5Z" fill="#f3bb50" stroke="#a86f10" /><circle cx="11" cy="11" r="4" fill="#eee" stroke="#a86f10" /></g>],
  ['수식', <g><path d="M2 17V4H20V10" stroke="#999" /><path d="M3 11L8 7L12 9L19 4" stroke="#c33" /><IconText x="8" y="20">f(x)</IconText></g>],
  ['비교차트', <g><path d="M3 2V18H20" stroke="#777" /><path d="M4 13L8 8L12 10L19 4" stroke="#e44" strokeWidth="2" /><path d="M13 13H20V20H13ZM16.5 13V20M13 16.5H20" stroke="#1b2c6b" fill="#fff" /></g>],
  ['선택', <g>{wave}<path d="M7 2L8 15L11 12L15 19L18 17L14 11L18 10Z" fill="#1b2c6b" /></g>],
  ['수평선', <g>{wave}<path d="M2 7H20" stroke="#1b2c6b" strokeWidth="2" /><path d="M1 6h2v2h-2zM19 6h2v2h-2z" fill="#e33" /></g>],
  ['추세선', <g>{wave}<path d="M2 14L20 5" stroke="#1b2c6b" /><path d="M1 13h2v2h-2zM19 4h2v2h-2z" fill="#e33" /></g>],
  ['자동추세', <g><path d="M2 10L6 6L9 10L20 3" stroke="#999" /><path d="M1 9h2v2h-2zM19 2h2v2h-2z" fill="#e33" /><IconText x="1" y="20">AUTO</IconText></g>],
  ['지그재그', <g>{wave}<path d="M3 13L8 14L12 6L16 16" stroke="#1b2c6b" /><path d="M2 12h2v2h-2zM7 13h2v2h-2zM11 5h2v2h-2zM15 15h2v2h-2z" fill="#e33" /></g>],
  ['캔들', <g><path d="M5 4V18M18 4V18" stroke="#1b2c6b" /><path d="M3 8H7V14H3ZM16 8H20V14H16Z" fill="#5272c4" stroke="#1b2c6b" /><path d="M11.5 3V6M11.5 16V19M9.5 6H13.5V16H9.5Z" stroke="#d11" fill="#fff" /></g>],
  ['반복', <g>{wave}<path d="M5 11V5H17V10" stroke="#1b2c6b" strokeWidth="3" /><path d="M1 9H9L5 14ZM13 9H21L17 14Z" fill="#1b2c6b" /></g>],
  ['글자', <g>{wave}<IconText x="3" y="11" $big>T</IconText></g>],
  ['번호', <g><path d="M4 16V9H11" stroke="#1b2c6b" /><path d="M3 15h3v3h-3z" fill="#e77" /><path d="M11 3H20V14H11Z" fill="#fff" stroke="#000" /><IconText x="14" y="11">1</IconText></g>],
  ['지우개', <g>{wave}<path d="M9 10L14 4L20 5L18 10L13 15L9 14Z" fill="#fff" stroke="#222" /></g>],
  ['전체지우기', <g>{wave}<path d="M10 7L15 2L20 3L18 8L14 12L10 11Z" fill="#fff" stroke="#222" /><IconText x="2" y="20">ALL</IconText></g>],
  ['표', <g><path d="M2 4H20V18H2ZM2 8H20M2 13H20M8 4V18M14 4V18" stroke="#999" fill="#fff" /><IconText x="11" y="17" $big>T</IconText></g>],
  ['고저종', <g>{wave}<path d="M2 5H15" stroke="#c00" /><path d="M2 11H15" stroke="#000" /><path d="M2 17H15" stroke="#05a" /><IconText x="16" y="8">H</IconText><IconText x="16" y="14">C</IconText><IconText x="16" y="20">L</IconText></g>],
  ['패턴', <g><path d="M2 16L6 12L9 15L13 6L17 16L21 6" stroke="#1b2c6b" /><path d="M1 16h2v2h-2zM5 11h2v2h-2zM12 5h2v2h-2zM16 15h2v2h-2zM20 5h2v2h-2z" fill="#e33" /></g>],
  ['갠팬', <g><path d="M6 18L20 8M6 18L20 12M6 18L20 17M6 18L15 8" stroke="#1b2c6b" /><IconText x="1" y="8">G·F</IconText><path d="M5 17h2v2h-2z" fill="#e33" /></g>],
];

const quickIcons = [
  ['S1', '#fff', <g><path d="M4 3H18V17H4Z" fill="#f59a1e" stroke="#8a5208" /><path d="M7 3H15V9H7ZM7 12H15V17H7Z" fill="#fff" stroke="#8a5208" /></g>],
  ['S2', '#fff', <g stroke="#f59a1e" strokeWidth="3"><circle cx="14" cy="7" r="3" /><path d="M12 9L5 16M8 13L10 16" /></g>],
  ['S3', '#d3a98e', <g><path d="M8 10V6Q11 2 14 6V10" stroke="#eee" strokeWidth="2" /><path d="M6 9H16V17H6Z" fill="#f8cc2c" /><path d="M11 11V15" stroke="#222" strokeWidth="2" /></g>],
  ['S4', '#fff', <g><path d="M1 4H7L9 2H13L15 4H21V18H1Z" fill="#8b4a51" /><path d="M1 4H21V7H1Z" fill="#c9877c" /><circle cx="11" cy="11" r="6" fill="#333a7a" stroke="#b9a0b0" /><circle cx="11" cy="11" r="2" fill="#88a" /></g>],
  ['S5', '#fff', <g><circle cx="11" cy="10" r="8" fill="#f6f8f8" /><path d="M11 10L6 7M11 10L12 15M4 10h1M17 10h1M11 3v1" stroke="#456" /><path d="M11 10L15 6" stroke="#e33" /></g>],
  ['S6', '#d3a98e', <g><path d="M4 4H18V14H4Z" fill="#ff4a16" stroke="#f4e4dc" /><path d="M11 14V17M7 17H15" stroke="#eee" strokeWidth="2" /></g>],
  ['S7', '#fff', <g><circle cx="11" cy="10" r="5" stroke="#445266" strokeWidth="3" /><path d="M11 2V5M11 15V18M3 10H6M16 10H19M5 4L7 6M15 14L17 16M17 4L15 6M5 16L7 14" stroke="#445266" strokeWidth="2" /></g>],
];

const footIcons = [
  ['새 차트', <path d="M2 2H13V13H2ZM8 8H16V16H8ZM12 8V16M8 12H16" />],
  ['복제', <path d="M2 2H12V9H2ZM6 6H16V16H6Z" fill="#eee" />],
  ['축소 보기', <path d="M2 2H16M2 16H16M3 12L7 8L10 10L15 5" strokeDasharray="2 1" />],
  ['커서', <path d="M1 4H17M5 4V17M8 7L15 14M8 7V12M8 7H13" />],
  ['수평', <path d="M1 3H17M2 14L6 8L9 12L12 7L16 11" />],
  ['수직', <path d="M7 1V17M1 13L5 9L8 13L12 7L17 10" />],
  ['사선', <path d="M2 16L14 2M3 10L8 15L11 8L16 14" />],
  ['모두 지우기', <path d="M2 9L8 3H14L9 9V14H2ZM2 9H9M12 11V16M15 11V16" />],
  ['이미지', <path d="M5 2H16V11M2 6H13V16H2ZM3 13L6 10L8 12L12 8" />],
  ['돋보기', <g><circle cx="8" cy="7" r="5" /><path d="M12 11L16 16" strokeWidth="2" /></g>],
  ['작게', <path d="M4 9H14" strokeWidth="2" />],
  ['크게', <path d="M3 9H15M9 3V15" strokeWidth="2" />],
  ['글꼴', <path d="M4 15L9 3L14 15M6 11H12" strokeWidth="2" />],
];

const App = () => {
  const [unit, setUnit] = useState('초');
  const [step, setStep] = useState('5');
  const [code, setCode] = useState('093920');
  const [count, setCount] = useState('869');
  const [tab, setTab] = useState(18);
  const [zoom, setZoom] = useState(44);

  return (
    <Window>
      <GlobalStyle />
      <TitleBar>
        <Brand>
          <Logo viewBox="0 0 16 20">
            <rect width="16" height="20" fill="#fff" />
            <path d="M10 1L9 5L12 3L11 7L8 8L11 10L13 14L14 18L10 15L8 12L6 14L2 19L4 13L6 10L3 7L7 6L6 3Z" fill="#d81e1e" />
          </Logo>
          영웅문
        </Brand>
        <TitleTools>
          <Phone>
            금융센터&nbsp; 1544-9000/1544-9911 &nbsp;|&nbsp; 주문 1544-4989 &nbsp;|&nbsp; ARS 1544-9900
            <Caret $color="#c8d2e8" />
          </Phone>
          <TitleGroup>
            채팅
            <svg width="18" height="18" fill="none" aria-hidden="true">
              <path d="M2 6L10 4L16 1L14 6V15L8 17L2 14Z" fill="#a9b6d3" />
              <path d="M6 7V13M11 7L7 10L11 13" stroke="#3a5691" strokeWidth="2" />
            </svg>
            <svg width="18" height="18" aria-hidden="true"><path d="M9 1L17 9H15V17H11V11H7V17H3V9H1Z" fill="#a9b6d3" /></svg>
          </TitleGroup>
          <TitleGroup>
            {[1, 2, 3, 4, 5, 6, 7, 8].map((n) => (
              <Desk key={n} type="button" $on={n === 1}>{n}</Desk>
            ))}
          </TitleGroup>
          <TitleGroup $last>
            <svg width="78" height="18" fill="none" stroke="#b4c0da" aria-hidden="true">
              <path d="M2 2H12V11H2ZM7 5V9M4 15H10M7 11V15" strokeWidth="2" />
              <path d="M23 15H34" strokeWidth="2" />
              <path d="M48 3H57V10H48ZM45 7H54V14H45Z" fill="#3a5691" />
              <path d="M66 4L77 15M77 4L66 15" />
            </svg>
          </TitleGroup>
        </TitleTools>
      </TitleBar>

      <MenuBar>
        {menus.map((m) => (
          <MenuLink key={m} href="#" $hot={m === '로보마켓' || m === '빅데이터'}>{m}</MenuLink>
        ))}
        <MdiButtons>
          <MdiButton type="button" aria-label="최소화"><svg width="11" height="11"><path d="M2 9H8" stroke="#222" strokeWidth="2" /></svg></MdiButton>
          <MdiButton type="button" aria-label="복원"><svg width="11" height="11" fill="none"><path d="M3 1H10V7H3ZM1 4H8V10H1Z" stroke="#222" /></svg></MdiButton>
          <MdiButton type="button" aria-label="닫기"><svg width="11" height="11"><path d="M2 2L9 9M9 2L2 9" stroke="#222" strokeWidth="2" /></svg></MdiButton>
        </MdiButtons>
      </MenuBar>

      <ToolBar>
        <Grip />
        <SearchPill>
          <PillInput aria-label="화면 검색" />
          <Caret $color="#999" />
          <svg width="22" height="18" fill="none" stroke="#aaa"><path d="M1 0V18" stroke="#777" /><circle cx="11" cy="8" r="4" strokeWidth="2" /><path d="M14 11L18 15" strokeWidth="2" /></svg>
        </SearchPill>
        <QuickIcons>
          {quickIcons.map(([name, bg, icon]) => (
            <Quick key={name} type="button">
              <QuickFace $bg={bg}><svg width="22" height="20" fill="none">{icon}</svg></QuickFace>
              <QuickName>{name}</QuickName>
            </Quick>
          ))}
        </QuickIcons>
        <Collapse type="button" aria-label="접기" />
        <Dropdown type="button"><span>추천<br />메뉴</span><Caret $color="#555" /></Dropdown>
        <Dropdown type="button" $strong><span>주식<br />툴바</span><Caret $color="#555" /></Dropdown>
        {shortcuts.map(([a, b, more], i) => (
          <Shortcut key={i} type="button" $more={more}>{a}<br />{b}</Shortcut>
        ))}
        <Clock>
          <ClockLine>
            <svg width="16" height="16" fill="none"><path d="M1 3H15V15H1Z" fill="#eee" stroke="#666" /><path d="M1 5H15" stroke="#555" strokeWidth="3" /><path d="M4 9H13M4 12H13" stroke="#888" strokeDasharray="1 2" /></svg>
            23/03/07
          </ClockLine>
          <ClockLine>
            <svg width="16" height="16" fill="none"><circle cx="8" cy="8" r="6" fill="#fff" stroke="#666" strokeWidth="2" /><path d="M8 4V8L10 11" stroke="#666" strokeWidth="2" /></svg>
            10:17:02
          </ClockLine>
        </Clock>
      </ToolBar>

      <Workspace>
        <ChartWindow>
          <Controls>
            <SquareButton type="button" aria-label="종목창"><svg width="16" height="14" fill="none"><path d="M4 2H14V12H4" stroke="#333" strokeWidth="2" /><path d="M7 4L2 7L7 10Z" fill="#333" /></svg></SquareButton>
            <Combo><ComboText $width={16} $grey>주</ComboText><Caret $color="#555" /></Combo>
            <SquareButton type="button">전</SquareButton>
            <Combo>
              <ComboInput $width={54} aria-label="종목코드" value={code} onChange={(e) => setCode(e.target.value)} />
              <Caret $color="#555" />
              <svg width="20" height="16" fill="none" stroke="#888"><path d="M1 0V16" stroke="#bbb" /><circle cx="10" cy="7" r="4" strokeWidth="2" /><path d="M13 10L17 14" strokeWidth="2" /></svg>
            </Combo>
            <Combo>
              <svg width="16" height="14"><path d="M1 5H4L8 1V13L4 9H1Z" fill="#555" /><path d="M11 4V10M14 4V10" stroke="#888" strokeDasharray="2 1" /></svg>
              <Caret $color="#555" />
            </Combo>
            <StockName><b>신</b>서원인텍</StockName>
            <Segments>
              {['일', '주', '월', '년'].map((u) => <Segment key={u} type="button" $on={unit === u} onClick={() => setUnit(u)}>{u}</Segment>)}
            </Segments>
            <Segments>
              {['분', '초', '틱'].map((u) => <Segment key={u} type="button" $on={unit === u} onClick={() => setUnit(u)}>{u}</Segment>)}
            </Segments>
            <Segments>
              {['1', '3', '5', '10', '15', '30', '45', '60'].map((s) => <Segment key={s} type="button" $on={step === s} onClick={() => setStep(s)}>{s}</Segment>)}
            </Segments>
            <Combo><ComboText $width={24}>5</ComboText><Caret $color="#555" /></Combo>
            <Combo><ComboInput $width={28} $right aria-label="조회 개수" value={count} onChange={(e) => setCount(e.target.value)} /></Combo>
            <Total>/2123</Total>
            <Segments>
              <Segment type="button" aria-label="캔들 추가"><svg width="16" height="16"><path d="M1 4h4v7h-4zM3 2v11" fill="#444" stroke="#444" /><path d="M7 4h3v5h-3z" fill="#999" /><path d="M8 12H15M11 9V16" stroke="#333" strokeWidth="2" /></svg></Segment>
              <Segment type="button" aria-label="지표 추가"><svg width="16" height="16" fill="none"><path d="M1 6L5 2L9 7L14 2" stroke="#666" /><path d="M7 12H14M10 9V16" stroke="#333" strokeWidth="2" /></svg></Segment>
              <Segment type="button" aria-label="저장"><svg width="16" height="16" fill="none" stroke="#555"><path d="M2 2H12L14 4V14H2ZM5 2V6H11V2M4 14V9H12V14" /></svg></Segment>
              <Segment type="button" aria-label="환경설정"><svg width="16" height="16" fill="none" stroke="#666"><circle cx="8" cy="8" r="4" strokeWidth="3" /><path d="M8 1V4M8 12V15M1 8H4M12 8H15M3 3L5 5M11 11L13 13M13 3L11 5M3 13L5 11" strokeWidth="2" /></svg></Segment>
            </Segments>
            <CheckLabel><Check type="checkbox" />D</CheckLabel>
          </Controls>

          <Quote>
            <QuoteBox>
              <QuoteCell $width={172}><Num $c="#e61a0a" $w={58}>6,740</Num><Up /><Num $c="#e61a0a" $w={40}>140</Num><Num $c="#e61a0a" $w={46}>+2.12%</Num></QuoteCell>
              <QuoteCell $width={171}><Num $w={70}>1,195,849</Num><Num $c="#155ac4" $w={56}>8.93%</Num><Num $w={40}>6.43%</Num></QuoteCell>
              <QuoteCell $width={82}><Num $w={76}>8,096백만</Num></QuoteCell>
              <QuoteCell $width={139}>최우선<Num $c="#e61a0a" $w={45}>6,750</Num><Num $c="#e61a0a" $w={48}>6,740</Num></QuoteCell>
              <QuoteCell $width={184} $last>시<Num $c="#e61a0a" $w={40}>6,790</Num><Num $w={20}>고</Num><Num $c="#e61a0a" $w={38}>6,930</Num><Num $w={22}>저</Num><Num $c="#e61a0a" $w={38}>6,620</Num></QuoteCell>
            </QuoteBox>
            <OrderButton type="button" $bg="#f6d3cf">매수</OrderButton>
            <OrderButton type="button" $bg="#c6dcf2">매도</OrderButton>
          </Quote>

          <ChartGrid>
            <Side>
              <TableIcon viewBox="0 0 14 14"><path d="M1 1H13V13H1Z" fill="#fff" stroke="#222" /><path d="M3 4H11M3 7H11M3 10H11M5 3V11M8 3V11" stroke="#666" /></TableIcon>
              <Scale $top={51} $bottom={66} $align="right">
                {leftScale.map((v, i) => <ScaleLabel key={i}>{v}</ScaleLabel>)}
              </Scale>
              <NowTag $left>6,740</NowTag>
              <NowRate $left>.12%</NowRate>
              <CursorTag $left>6,662<i>+0,94%</i></CursorTag>
            </Side>
            <Plot>
              <PriceChart />
              <LegendLayer>
                <Legend items={legendTop} />
                <Legend items={legendSecond} large />
              </LegendLayer>
              <Readouts>
                {readouts.map(([a, ca, b, cb]) => (
                  <Readout key={b}>
                    <ReadoutText $color={ca}>{a}</ReadoutText>
                    <ReadoutText $color={cb}>{b}</ReadoutText>
                  </Readout>
                ))}
              </Readouts>
            </Plot>
            <Side $right>
              <Limit $color="#e61a0a">LC:1,81</Limit>
              <Limit $color="#155ac4">HC:-2,74</Limit>
              <Scale $top={57} $bottom={16} $ticks>
                {rightScale.map((v, i) => <ScaleLabel key={i}>{v}</ScaleLabel>)}
              </Scale>
              <NowTag>6,740</NowTag>
              <NowRate>2,12%</NowRate>
              <CursorTag>6,662<i>+0,94%</i></CursorTag>
            </Side>

            <Side $lower>
              <Scale $top={35} $bottom={17} $align="right" $gap>
                <ScaleLabel>5,00</ScaleLabel><ScaleLabel>0,00</ScaleLabel><ScaleLabel>-5,00</ScaleLabel>
              </Scale>
            </Side>
            <Plot $lower>
              <VolumeChart />
              <LegendLayer>
                <Legend items={legendLower} />
              </LegendLayer>
            </Plot>
            <Side $right $lower>
              <ClosePane type="button" aria-label="지표 닫기">×</ClosePane>
              <Scale $top={35} $bottom={30} $ticks>
                <ScaleLabel>75,000</ScaleLabel><ScaleLabel>50,000</ScaleLabel><ScaleLabel>25,000</ScaleLabel>
              </Scale>
            </Side>

            <Side $lower />
            <TimeAxis>
              <TimeCell $first>03/06</TimeCell>
              {times.map((t) => <TimeCell key={t}>{t}</TimeCell>)}
              <CursorTime>2023/03/07(화) 10:15:05</CursorTime>
            </TimeAxis>
            <EndTime>10:16:50</EndTime>
          </ChartGrid>

          <Footer>
            <Scroll>
              <ScrollButton type="button" aria-label="왼쪽"><svg width="10" height="10"><path d="M7 1V9L2 5Z" /></svg></ScrollButton>
              <Track><Thumb /></Track>
              <ScrollButton type="button" aria-label="재생"><svg width="10" height="10"><path d="M3 1V9L8 5Z" /></svg></ScrollButton>
              <ScrollButton type="button" aria-label="뒤로"><svg width="10" height="10"><path d="M5 1V9L0 5ZM10 1V9L5 5Z" /></svg></ScrollButton>
              <ScrollButton type="button" aria-label="정지"><svg width="10" height="10"><path d="M2 2H8V8H2Z" /></svg></ScrollButton>
              <ScrollButton type="button" aria-label="앞으로"><svg width="10" height="10"><path d="M0 1V9L5 5ZM5 1V9L10 5Z" /></svg></ScrollButton>
            </Scroll>
            <Speed type="range" aria-label="확대 비율" value={zoom} onChange={(e) => setZoom(e.target.value)} />
            <FootTools>
              {footIcons.map(([name, icon]) => (
                <FootButton key={name} type="button" aria-label={name} $on={name === '커서'}>
                  <svg width="17" height="18" fill="none" stroke="#666">{icon}</svg>
                </FootButton>
              ))}
            </FootTools>
          </Footer>
        </ChartWindow>

        <Rail>
          <RailGrip />
          {railIcons.map(([name, icon]) => (
            <RailButton key={name} type="button" aria-label={name}>
              <svg width="22" height="22" fill="none">{icon}</svg>
            </RailButton>
          ))}
          <RailEnd />
        </Rail>
      </Workspace>

      <TabBar>
        <Grip />
        {tabs.map((t, i) => (
          <Tab key={i} type="button" $on={tab === i} onClick={() => setTab(i)}>
            <Badge>1</Badge>
            <TabName>{t}</TabName>
          </Tab>
        ))}
        <TabTools>
          <svg width="16" height="18" aria-hidden="true"><path d="M5 2H10V7H14L7 13L1 7H5ZM4 15H11V17H4Z" fill="#666" /></svg>
          <svg width="16" height="18" fill="none" aria-hidden="true"><path d="M1 2H15V16H1Z" fill="#fff" stroke="#777" strokeWidth="2" /><path d="M3 13L7 8L9 10L13 6V14H3Z" fill="#3ab5b0" /></svg>
        </TabTools>
      </TabBar>
      <Taskbar />
    </Window>
  );
};

export default App;

const GlobalStyle = createGlobalStyle`
  * {
    box-sizing: border-box;
  }
  body {
    margin: 0;
    background-color: #3a5691;
    color: #333;
    font-family: 'Liberation Sans', 'Noto Sans CJK KR', sans-serif;
    font-size: 12px;
  }
  button, input {
    font: inherit;
    color: inherit;
    margin: 0;
    padding: 0;
    border: 0;
    background: none;
  }
  svg {
    display: block;
    flex-shrink: 0;
  }
`;

const Window = styled.div`
  display: flex;
  flex-direction: column;
  height: 100vh;
  min-height: 900px;
  padding: 0 3px;
  background-color: #3a5691;
  white-space: nowrap;
  overflow: hidden;
`;

const TitleBar = styled.header`
  display: flex;
  flex-shrink: 0;
  justify-content: space-between;
  height: 25px;
  color: #dde4f2;
`;

const Brand = styled.div`
  display: flex;
  align-items: center;
  gap: 4px;
  font-size: 13px;
  color: #fff;
`;

const Logo = styled.svg`
  width: 17px;
  height: 20px;
  margin-left: 1px;
`;

const TitleTools = styled.div`
  display: flex;
`;

const Phone = styled.div`
  display: flex;
  align-items: center;
  gap: 6px;
  padding-right: 6px;
`;

const TitleGroup = styled.div`
  display: flex;
  align-items: center;
  gap: 8px;
  padding: 0 8px;
  border-left: 1px solid #54709f;
  ${(props) => props.$last && 'padding: 0 9px;'}
`;

const Desk = styled.button`
  color: #fff;
  text-decoration: ${(props) => (props.$on ? 'underline' : 'none')};
  cursor: pointer;
`;

const Caret = styled.span`
  flex-shrink: 0;
  width: 0;
  border: 4px solid transparent;
  border-top: 5px solid ${(props) => props.$color};
  border-bottom: 0;
  margin: 0 3px;
`;

const MenuBar = styled.nav`
  display: flex;
  flex-shrink: 0;
  align-items: center;
  gap: 12px;
  height: 22px;
  padding: 0 4px 0 9px;
  border-bottom: 1px solid #aaa;
  background: linear-gradient(#d6d6d6, #ececec);
  font-size: 13px;
`;

const MenuLink = styled.a`
  color: ${(props) => (props.$hot ? '#e61a0a' : '#333')};
  text-decoration: none;
`;

const MdiButtons = styled.div`
  display: flex;
  margin-left: auto;
`;

const MdiButton = styled.button`
  display: flex;
  align-items: center;
  justify-content: center;
  width: 15px;
  height: 15px;
  border: 1px solid #777;
  border-top-color: #fff;
  border-left-color: #fff;
  background-color: #e4e4e0;
`;

const ToolBar = styled.div`
  display: flex;
  flex-shrink: 0;
  height: 40px;
  background: linear-gradient(#a9b9d6, #c0cadf);
`;

const Grip = styled.div`
  width: 12px;
  flex-shrink: 0;
  margin: 2px 0;
  background:
    linear-gradient(#fff, #fff) 4px 10px / 1px 100% no-repeat,
    linear-gradient(#888, #888) 6px 10px / 1px 100% no-repeat;
  &::before {
    content: '×';
    display: block;
    font-size: 10px;
    line-height: 8px;
    padding-left: 2px;
    color: #555;
  }
`;

const SearchPill = styled.div`
  display: flex;
  align-items: center;
  width: 96px;
  height: 24px;
  margin: 8px 5px 0 2px;
  border: 1px solid #eee;
  border-radius: 12px;
  background: #504c50;
`;

const PillInput = styled.input`
  width: 52px;
  padding-left: 8px;
  color: #fff;
`;

const QuickIcons = styled.div`
  display: flex;
  padding: 4px 4px 0 5px;
  border-left: 1px solid #d3dbea;
`;

const Quick = styled.button`
  display: flex;
  flex-direction: column;
  align-items: center;
  width: 26px;
  cursor: pointer;
`;

const QuickFace = styled.span`
  border-radius: 4px;
  background-color: ${(props) => props.$bg};
`;

const QuickName = styled.span`
  width: 26px;
  height: 10px;
  margin-top: 3px;
  border: 1px solid #aaa;
  background-color: #ddd;
  font-size: 9px;
  line-height: 9px;
  color: #444;
`;

const Collapse = styled.button`
  align-self: center;
  border: 4px solid transparent;
  border-right-color: #555;
  border-left: 0;
  margin-right: 4px;
`;

const Dropdown = styled.button`
  display: flex;
  align-items: center;
  gap: 5px;
  width: 51px;
  padding-left: 8px;
  border-left: 1px solid #d3dbea;
  font-size: 13px;
  line-height: 18px;
  color: ${(props) => (props.$strong ? '#000' : '#333')};
`;

const Shortcut = styled.button`
  width: 44px;
  border-left: 1px solid #d3dbea;
  font-size: 13px;
  line-height: 18px;
  cursor: pointer;
  ${(props) => props.$more && 'background: linear-gradient(135deg, transparent 50%, #7d8798 50%) 37px 32px / 5px 5px no-repeat;'}
`;

const Clock = styled.div`
  display: flex;
  flex-direction: column;
  margin-left: auto;
  border-left: 1px solid #d3dbea;
`;

const ClockLine = styled.div`
  display: flex;
  align-items: center;
  gap: 8px;
  flex: 1;
  padding: 0 6px 0 8px;
  color: #555;
  & + & {
    border-top: 1px solid #d3dbea;
  }
`;

const Workspace = styled.main`
  display: flex;
  flex: 1;
  min-height: 0;
  background-color: #f0f0f0;
`;

const ChartWindow = styled.section`
  display: flex;
  flex-direction: column;
  flex: 1;
  min-width: 0;
  padding: 5px 4px 0 3px;
  background: linear-gradient(#d0d0d0 0 60px, #ececec 60px);
`;

const Controls = styled.div`
  display: flex;
  gap: 1px;
  height: 20px;
  margin-bottom: 3px;
  color: #000;
`;

const SquareButton = styled.button`
  display: flex;
  align-items: center;
  justify-content: center;
  width: 20px;
  border: 1px solid #888;
  background-color: #f2f2f2;
`;

const Combo = styled.div`
  display: flex;
  align-items: center;
  border: 1px solid #888;
  background-color: #fafafa;
`;

const ComboInput = styled.input`
  width: ${(props) => props.$width}px;
  padding: 0 2px;
  text-align: ${(props) => (props.$right ? 'right' : 'left')};
`;

const ComboText = styled.span`
  width: ${(props) => props.$width}px;
  text-align: center;
  color: ${(props) => (props.$grey ? '#888' : '#000')};
`;

const StockName = styled.div`
  display: flex;
  align-items: center;
  gap: 3px;
  width: 80px;
  border: 1px solid #888;
  background: linear-gradient(135deg, #fff 88%, #aaa 88%);
  color: #800040;
  b {
    padding: 0 2px;
    background-color: #0d6b5f;
    color: #fff;
    font-weight: normal;
    line-height: 18px;
  }
`;

const Segments = styled.div`
  display: flex;
  border: 1px solid #888;
`;

const Segment = styled.button`
  display: flex;
  align-items: center;
  justify-content: center;
  width: 19px;
  background-color: ${(props) => (props.$on ? '#4a80c8' : '#f2f2f2')};
  color: ${(props) => (props.$on ? '#fff' : '#000')};
  cursor: pointer;
  & + & {
    border-left: 1px solid #aaa;
  }
`;

const Total = styled.span`
  align-self: center;
  margin-right: 2px;
  color: #333;
`;

const CheckLabel = styled.label`
  display: flex;
  align-items: center;
  gap: 3px;
`;

const Check = styled.input`
  appearance: none;
  width: 13px;
  height: 13px;
  border: 1px solid #888;
  background-color: #fff;
`;

const Quote = styled.div`
  display: flex;
  gap: 2px;
  height: 20px;
  margin-bottom: 3px;
  color: #000;
`;

const QuoteBox = styled.div`
  display: flex;
  border: 1px solid #888;
  background-color: #f2f2f2;
`;

const QuoteCell = styled.div`
  display: flex;
  align-items: center;
  width: ${(props) => props.$width}px;
  padding-left: 2px;
  border-right: ${(props) => (props.$last ? '0' : '1px solid #bbb')};
`;

const Num = styled.span`
  width: ${(props) => props.$w}px;
  text-align: right;
  color: ${(props) => props.$c || '#000'};
`;

const Up = styled.span`
  margin-left: 4px;
  border: 5px solid transparent;
  border-top: 0;
  border-bottom: 9px solid #e61a0a;
`;

const OrderButton = styled.button`
  width: 40px;
  border: 1px solid #888;
  background-color: ${(props) => props.$bg};
  cursor: pointer;
`;

const ChartGrid = styled.div`
  display: grid;
  grid-template-columns: 42px 1fr 53px;
  grid-template-rows: 722fr 148fr 18px;
  flex: 1;
  min-height: 0;
  border: 1px solid #999;
  background-color: #fff;
`;

const Side = styled.div`
  position: relative;
  min-height: 0;
  border-top: ${(props) => (props.$lower ? '1px solid #999' : '0')};
  border-left: ${(props) => (props.$right ? '1px solid #999' : '0')};
  border-right: ${(props) => (props.$right ? '0' : '1px solid #999')};
`;

const TableIcon = styled.svg`
  position: absolute;
  top: 19px;
  left: 5px;
  width: 14px;
  height: 14px;
`;

const Scale = styled.div`
  position: absolute;
  inset: 0;
  display: flex;
  flex-direction: column;
  justify-content: space-between;
  padding: ${(props) => props.$top}px ${(props) => (props.$gap ? 7 : 2)}px ${(props) => props.$bottom}px 8px;
  text-align: ${(props) => props.$align || 'left'};
  background: ${(props) =>
    props.$ticks ? 'repeating-linear-gradient(transparent 0 12px, #999 12px 13px) 0 0 / 3px 100% no-repeat' : 'none'};
`;

const ScaleLabel = styled.span`
  height: 14px;
  line-height: 14px;
  color: #444;
`;

const NowTag = styled.div`
  position: absolute;
  top: 425px;
  left: ${(props) => (props.$left ? '2px' : '4px')};
  width: ${(props) => (props.$left ? '36px' : '46px')};
  padding-left: 4px;
  background-color: #e61a0a;
  color: #fff;
  line-height: 13px;
`;

const NowRate = styled.div`
  position: absolute;
  top: 438px;
  left: 7px;
  background-color: #fff;
  color: #e61a0a;
  line-height: 12px;
`;

const CursorTag = styled.div`
  position: absolute;
  top: 580px;
  left: ${(props) => (props.$left ? '1px' : '3px')};
  width: ${(props) => (props.$left ? '38px' : '48px')};
  border: 1px solid #222;
  background-color: #ffd966;
  color: #444;
  line-height: 13px;
  text-align: center;
  z-index: 1;
  i {
    display: block;
    font-style: normal;
    font-size: 11px;
    color: #e61a0a;
  }
`;

const Plot = styled.div`
  position: relative;
  min-width: 0;
  min-height: 0;
  border-top: ${(props) => (props.$lower ? '1px solid #999' : '0')};
`;

const Drawing = styled.svg`
  position: absolute;
  inset: 0;
  width: 100%;
  height: 100%;
`;

const ChartText = styled.text`
  font-size: 12px;
`;

const LegendLayer = styled.div`
  position: absolute;
  top: 2px;
  left: 3px;
`;

const LegendRow = styled.div`
  display: flex;
  align-items: center;
  height: 12px;
  font-size: ${(props) => (props.$large ? 13 : 12)}px;
`;

const LegendMark = styled.span`
  width: 5px;
  height: 7px;
  margin-right: 6px;
  border: 1px solid #777;
  background-color: #ccc;
`;

const LegendName = styled.span`
  margin-right: 8px;
  line-height: 12px;
  color: ${(props) => props.$color};
  ${(props) => props.$boxed && 'outline: 1px solid #bbb;'}
`;

const Readouts = styled.div`
  position: absolute;
  top: 39px;
  right: 5px;
  font-weight: bold;
`;

const Readout = styled.div`
  display: grid;
  justify-items: end;
  height: 12px;
  line-height: 12px;
`;

const ReadoutText = styled.span`
  grid-area: 1 / 1;
  color: ${(props) => props.$color};
`;

const Limit = styled.div`
  position: relative;
  z-index: 1;
  padding-left: 1px;
  background-color: #fff;
  line-height: 13px;
  color: ${(props) => props.$color};
`;

const ClosePane = styled.button`
  position: absolute;
  top: 2px;
  right: 2px;
  z-index: 1;
  width: 9px;
  height: 8px;
  background-color: #333;
  color: #fff;
  font-size: 10px;
  line-height: 8px;
`;

const TimeAxis = styled.div`
  position: relative;
  display: grid;
  grid-template-columns: 252fr 244fr 230fr 242fr 218fr 224fr 215fr 155fr;
  border-top: 1px solid #999;
`;

const TimeCell = styled.span`
  padding-left: 2px;
  border-left: ${(props) => (props.$first ? '0' : '1px solid #999')};
  font-weight: ${(props) => (props.$first ? 'bold' : 'normal')};
  line-height: 16px;
  color: #333;
`;

const CursorTime = styled.span`
  position: absolute;
  right: 2px;
  top: 0;
  padding: 0 3px;
  border: 1px solid #222;
  background-color: #ffd966;
  color: #444;
  line-height: 15px;
`;

const EndTime = styled.span`
  padding-right: 2px;
  border-top: 1px solid #999;
  border-left: 1px solid #999;
  text-align: right;
  line-height: 16px;
`;

const Footer = styled.div`
  display: flex;
  flex-shrink: 0;
  align-items: center;
  height: 20px;
`;

const Scroll = styled.div`
  display: flex;
  flex: 1;
  height: 16px;
`;

const ScrollButton = styled.button`
  display: flex;
  align-items: center;
  justify-content: center;
  width: 17px;
  border: 1px solid #666;
  border-top-color: #fff;
  border-left-color: #fff;
  background-color: #eee;
`;

const Track = styled.div`
  flex: 1;
  display: flex;
  padding-left: 42%;
  background-color: #f6f6f6;
`;

const Thumb = styled.div`
  width: 74%;
  border: 1px solid #999;
  border-bottom: 2px solid #666;
  border-top-color: #fff;
  background-color: #eee;
`;

const Speed = styled.input`
  appearance: none;
  width: 69px;
  height: 16px;
  margin: 0 8px 0 4px;
  background:
    linear-gradient(#888, #888) 0 5px / 100% 2px no-repeat,
    repeating-linear-gradient(90deg, #222 0 1px, transparent 1px 7px) 2px 13px / 100% 3px no-repeat;
  &::-webkit-slider-thumb {
    appearance: none;
    width: 5px;
    height: 11px;
    margin-top: -4px;
    border: 1px solid #777;
    background-color: #eee;
  }
`;

const FootTools = styled.div`
  display: flex;
`;

const FootButton = styled.button`
  width: 17px;
  background-color: ${(props) => (props.$on ? '#fff' : 'transparent')};
  cursor: pointer;
`;

const Rail = styled.aside`
  display: flex;
  flex-direction: column;
  align-items: center;
  gap: 6px;
  width: 31px;
  background-color: #f0f0f0;
`;

const RailGrip = styled.div`
  width: 26px;
  height: 4px;
  border-bottom: 2px dotted #bbb;
`;

const RailButton = styled.button`
  display: flex;
  flex-shrink: 0;
  align-items: center;
  justify-content: center;
  width: 24px;
  height: 24px;
  border: 1px solid #999;
  background-color: #e6e6e2;
  cursor: pointer;
`;

const RailEnd = styled.div`
  align-self: stretch;
  flex: 1;
  margin-top: 8px;
  border-top: 1px solid #aaa;
  background-color: #f4f6fa;
`;

const TabBar = styled.nav`
  display: flex;
  flex-shrink: 0;
  height: 27px;
  background: linear-gradient(#d2d2d2, #e4e4e4);
  border-top: 1px solid #f4f4f4;
`;

const Tab = styled.button`
  display: flex;
  align-items: center;
  gap: 6px;
  flex: 0 1 96px;
  min-width: 0;
  padding-left: 4px;
  border-right: 1px solid #f4f4f4;
  background-color: ${(props) => (props.$on ? '#b4b4b4' : 'transparent')};
  font-size: 13px;
  cursor: pointer;
`;

const TabName = styled.span`
  font-size: 12px;
`;

const Badge = styled.span`
  flex-shrink: 0;
  width: 13px;
  border-radius: 2px;
  background-color: #5f7cb8;
  color: #fff;
  font-size: 11px;
  line-height: 15px;
`;

const TabTools = styled.div`
  display: flex;
  align-items: center;
  gap: 13px;
  margin-left: auto;
  padding-right: 4px;
`;

const Taskbar = styled.div`
  flex-shrink: 0;
  height: 5px;
  margin: 0 -3px;
  border-top: 3px solid #3a5691;
  background-color: #54493a;
`;
